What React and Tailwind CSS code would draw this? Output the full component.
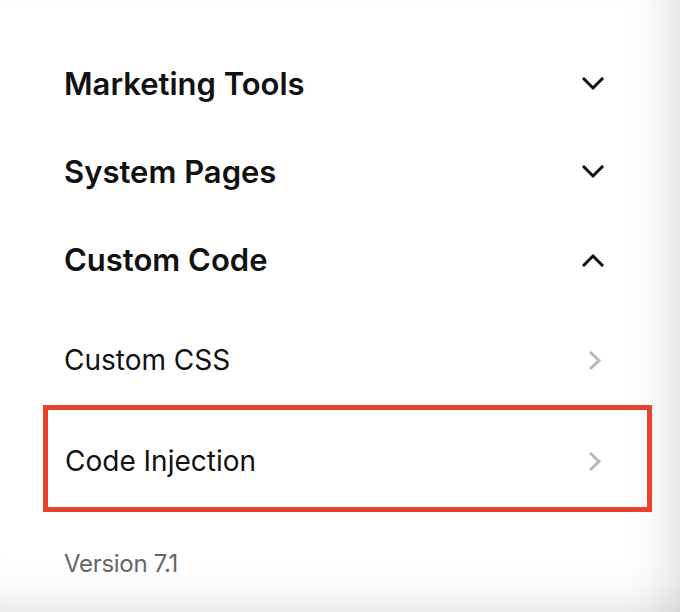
import React from 'react';

function ChevronDown({ up }) {
    return (
        <svg width="22" height="14" viewBox="0 0 22 14" className={up ? 'rotate-180' : ''}>
            <polyline points="2,2 11,11 20,2" fill="none" stroke="#111" strokeWidth="3" strokeLinecap="square" />
        </svg>
    );
}

function ChevronRight() {
    return (
        <svg width="15" height="21" viewBox="0 0 15 21">
            <polyline points="3,2 12,10.5 3,19" fill="none" stroke="#b8b8b8" strokeWidth="3" />
        </svg>
    );
}

function Section({ title, open }) {
    return (
        <div className="flex h-[88px] items-center justify-between">
            <h2 className="text-[31px] font-semibold text-[#111]">{title}</h2>
            <ChevronDown up={open} />
        </div>
    );
}

export default function App() {
    return (
        <div
            className="h-[612px] w-[680px] overflow-hidden bg-white shadow-[inset_-50px_0_45px_-38px_rgba(0,0,0,0.12),inset_0_-45px_40px_-34px_rgba(0,0,0,0.1)]"
            style={{ fontFamily: 'Inter, "Noto Sans", sans-serif' }}
        >
            <div className="pl-[64px] pr-[76px] pt-[40px]">
                <Section title="Marketing Tools" />
                <Section title="System Pages" />
                <Section title="Custom Code" open />

                <div className="flex h-[101px] items-center justify-between pr-[2px] pt-[11px]">
                    <span className="text-[28px] text-[#111]">Custom CSS</span>
                    <ChevronRight />
                </div>

                <div className="-ml-[21px] -mr-[48px] flex h-[107px] items-center justify-between border-[5px] border-[#e8432a] pl-[17px] pr-[45px] pt-[5px]">
                    <span className="text-[28px] text-[#111]">Code Injection</span>
                    <ChevronRight />
                </div>

                <div className="mt-[34px] text-[24px] tracking-[-0.3px] text-[#666]">Version 7.1</div>
            </div>
        </div>
    );
}
